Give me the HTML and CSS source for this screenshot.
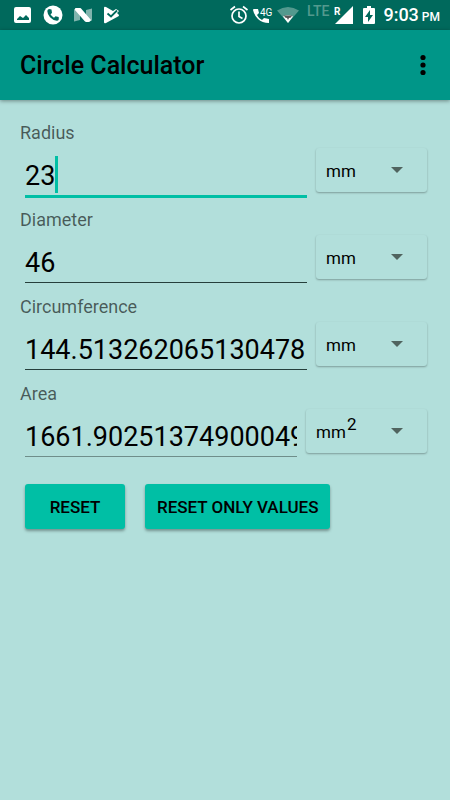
FILE: index.html
```html
<!DOCTYPE html>
<html lang="en">
<head>
<meta charset="utf-8">
<meta name="viewport" content="width=device-width, initial-scale=1">
<title>Circle Calculator</title>
<link rel="stylesheet" href="styles.css">
</head>
<body>
<div class="status">
  <div class="status-left">
    <svg width="18" height="18" viewBox="0 0 18 18"><path fill="#fff" fill-rule="evenodd" d="M2 1h13a2 2 0 0 1 2 2v12a2 2 0 0 1-2 2H2a2 2 0 0 1-2-2V3a2 2 0 0 1 2-2zM3 14h12v-2l-3-3-3 3-3-2-3 3z"/></svg>
    <svg width="20" height="20" viewBox="0 0 20 20"><circle cx="10" cy="10" r="9.500" fill="#fff"/><path fill="#00695c" d="M6 4 L8.500 4.500 L9 8 L7.500 9.300 Q8.800 11.700 11 12.800 L12.500 11.200 L15.700 12 L15.800 14.300 Q15.500 15.800 13.800 15.800 Q10 15.300 7 12.200 Q4.400 9.300 4.300 6 Q4.500 4.500 6 4z"/></svg>
    <svg width="18" height="16" viewBox="0 0 18 16"><path fill="#80b4ad" d="M0 2.500L6 4v9l-6 1.500zM12 3l6-1.500v12L12 15z"/><path fill="#fff" d="M1.500 1h4.500q1 0 1.500 1L17 13l-1 1.500q-3 1-5 0L0.500 2.500z"/></svg>
    <svg width="18" height="18" viewBox="0 0 18 18"><path fill="#fff" d="M1 2q0-2 2-1l7 4 3-2 3 2-2 2 2 2q0 1-1 1.500L3 17q-2 1-2-1z"/><path fill="none" stroke="#00695c" stroke-width="1.800" d="M4.500 7.500l3.500 3 6-6"/></svg>
  </div>
  <div class="status-right">
    <svg width="20" height="20" viewBox="0 0 20 20"><g fill="none" stroke="#fff" stroke-width="1.700"><circle cx="10" cy="11" r="7"/><path d="M10 6.500v5l3.500 2M1.500 5L6 1.500M18.500 5L14 1.500"/></g></svg>
    <svg width="20" height="20" viewBox="0 0 20 20"><path fill="#fff" d="M1 4h4l1 4-2 2q2 4 5 5l2-2 5 1v4q-7 0-11-4T0 5q0-1 1-1z"/><text class="tiny" x="7" y="11">4G</text></svg>
    <svg width="22" height="16" viewBox="0 0 22 16"><path fill="#53998e" d="M0 3.500Q11-3.500 22 3.500L11 16z"/><path fill="#fff" d="M6 9.500Q11 7 16 9.500L11 16z"/><path fill="#555" d="M7 8.500h8l-1 2-2 .500-1 2-1-2-2-.500z"/></svg>
    <span class="lte">LTE</span>
    <svg width="20" height="20" viewBox="0 0 20 20"><path fill="#fff" d="M1 19L19 1v18z"/><text class="roam" x="0" y="10">R</text></svg>
    <svg class="battery" width="12" height="18" viewBox="0 0 12 18"><path fill="#fff" d="M4 0h4v2h3q1 0 1 1v14q0 1-1 1H1q-1 0-1-1V3q0-1 1-1h3z"/><path fill="#00695c" d="M7 4v5h3l-5 7v-5H2z"/></svg>
    <span class="time">9:03</span>
    <span class="meridiem">PM</span>
  </div>
</div>
<header class="appbar">
  <h1>Circle Calculator</h1>
  <button class="menu" type="button" aria-label="More options"><svg width="6" height="22" viewBox="0 0 6 22"><circle cx="3" cy="3.500" r="2.600"/><circle cx="3" cy="11" r="2.600"/><circle cx="3" cy="18.500" r="2.600"/></svg></button>
</header>
<main>
  <div class="field">
    <label for="radius">Radius</label>
    <div class="row">
      <div class="entry active"><input id="radius" type="text" inputmode="decimal" value="23"><span class="caret"></span></div>
      <div class="unit"><select aria-label="Radius unit"><option>mm</option><option>cm</option><option>m</option></select></div>
    </div>
  </div>
  <div class="field">
    <label for="diameter">Diameter</label>
    <div class="row">
      <div class="entry"><input id="diameter" type="text" inputmode="decimal" value="46"></div>
      <div class="unit"><select aria-label="Diameter unit"><option>mm</option><option>cm</option><option>m</option></select></div>
    </div>
  </div>
  <div class="field">
    <label for="circumference">Circumference</label>
    <div class="row">
      <div class="entry"><input id="circumference" type="text" inputmode="decimal" value="144.513262065130478"></div>
      <div class="unit"><select aria-label="Circumference unit"><option>mm</option><option>cm</option><option>m</option></select></div>
    </div>
  </div>
  <div class="field">
    <label for="area">Area</label>
    <div class="row">
      <div class="entry soft"><input id="area" type="text" inputmode="decimal" value="1661.90251374900049"></div>
      <div class="unit squared"><select aria-label="Area unit"><option>mm</option><option>cm</option><option>m</option></select><span class="power">2</span></div>
    </div>
  </div>
  <div class="actions">
    <button class="raised" type="button">RESET</button>
    <button class="raised" type="button">RESET ONLY VALUES</button>
  </div>
</main>
</body>
</html>
```

FILE: styles.css
```css
* { box-sizing: border-box; }

body {
  margin: 0;
  min-height: 100vh;
  background: #b2dfdb;
  color: #000;
  font-family: Roboto, "Liberation Sans", sans-serif;
}

svg { display: block; flex: none; }

.status {
  display: flex;
  justify-content: space-between;
  align-items: center;
  height: 30px;
  padding: 0 10px 0 14px;
  background: #00695c;
  color: #fff;
}

.status-left { display: flex; align-items: center; gap: 11px; }
.status-right { display: flex; align-items: center; gap: 4px; }

.tiny { font-size: 10px; fill: #fff; }
.roam { font-size: 10px; font-weight: 700; fill: #fff; }
.lte { margin: 0 1px 8px 4px; font-size: 14px; line-height: 14px; font-weight: 500; color: #53998e; }
.battery { margin: 0 4px 0 5px; }
.time { font-size: 18px; line-height: 20px; font-weight: 500; }
.meridiem { margin-left: -1px; font-size: 12px; line-height: 14px; padding-top: 3px; font-weight: 500; }

.appbar {
  display: flex;
  justify-content: space-between;
  align-items: center;
  height: 70px;
  padding: 2px 13px 0 20px;
  background: #009688;
  box-shadow: 0 1px 4px rgba(0, 0, 0, 0.4);
}

h1 { margin: 0; font-size: 25px; line-height: 32px; font-weight: 500; }

button { font-family: inherit; color: #000; border: 0; cursor: pointer; }

.menu { padding: 7px 11px 9px; background: none; }

main { padding: 20px; }

.field { height: 87px; }

label {
  display: block;
  padding-top: 1px;
  font-size: 18px;
  line-height: 23px;
  color: rgba(0, 0, 0, 0.6);
}

.row { display: flex; gap: 9px; padding: 0 3px 0 5px; }

.entry {
  position: relative;
  flex: 1;
  min-width: 0;
  height: 55px;
  padding-top: 16px;
}

.entry::after {
  content: "";
  position: absolute;
  left: 0;
  right: 0;
  bottom: 3px;
  height: 1px;
  background: #263f3c;
}

.entry.soft::after { background: #6f8e8a; }
.entry.active::after { bottom: 1px; height: 3px; background: #00bfa5; }

input {
  display: block;
  width: 100%;
  height: 32px;
  padding: 0;
  border: 0;
  outline: 0;
  background: none;
  color: #000;
  font: 27px/32px Roboto, "Liberation Sans", sans-serif;
}

.caret {
  position: absolute;
  left: 30px;
  top: 12px;
  width: 3px;
  height: 37px;
  background: #00bfa5;
}

.unit { position: relative; flex: none; width: 111px; height: 44px; margin-top: 4px; }
.unit.squared { width: 121px; }

.unit::after {
  content: "";
  position: absolute;
  right: 24px;
  top: 19px;
  border: 6px solid transparent;
  border-top-color: #50645f;
  border-bottom: 0;
  pointer-events: none;
}

select {
  appearance: none;
  width: 100%;
  height: 100%;
  padding: 1px 40px 0 10px;
  border: 0;
  border-radius: 3px;
  background: #b2dfdb;
  box-shadow: 0 1px 2px rgba(0, 0, 0, 0.3);
  color: #000;
  font: 17px/24px Roboto, "Liberation Sans", sans-serif;
}

.power {
  position: absolute;
  left: 41px;
  top: 3px;
  font-size: 17px;
  line-height: 24px;
  pointer-events: none;
}

.actions { display: flex; flex-wrap: wrap; gap: 20px; padding: 16px 5px; }

.raised {
  min-width: 100px;
  height: 45px;
  padding: 0 12px;
  border-radius: 3px;
  background: #00bfa5;
  box-shadow: 0 2px 3px rgba(0, 0, 0, 0.35);
  font-size: 17px;
  font-weight: 500;
}
```
